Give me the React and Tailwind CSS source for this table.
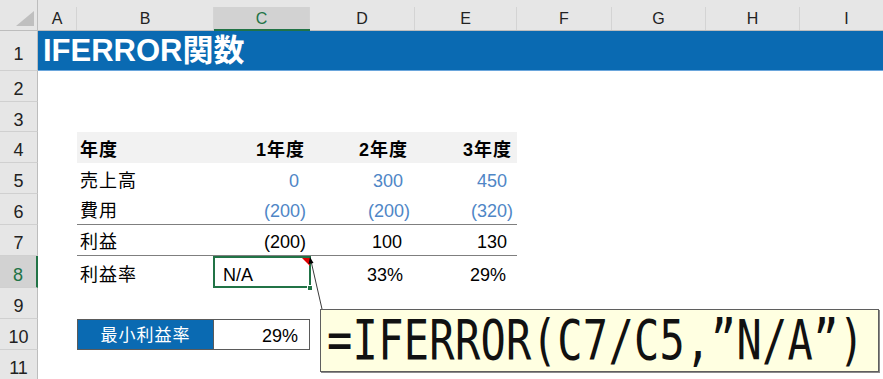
const COLS = [
  { k: "A", w: "w-[39px]" },
  { k: "B", w: "w-[137px]" },
  { k: "C", w: "w-[96px]" },
  { k: "D", w: "w-[105px]" },
  { k: "E", w: "w-[102px]" },
  { k: "F", w: "w-[95px]" },
  { k: "G", w: "w-[94px]" },
  { k: "H", w: "w-[94px]" },
  { k: "I", w: "w-[94px]" },
];

const BLUE_NUM = "text-[#4f86c6]";

function Row({ n, h, sel, children }) {
  return (
    <div className={`flex ${h}`}>
      <div
        className={`w-[38px] shrink-0 flex items-center justify-center pt-[7px] text-[18px] border-b border-b-[#d0d0d0] ${
          sel
            ? "bg-[#d2d2d2] text-[#217346] border-r-2 border-r-[#217346]"
            : "bg-[#e6e6e6] text-[#222] border-r border-r-[#bdbdbd]"
        }`}
      >
        {n}
      </div>
      <div className="flex flex-1 min-w-0">{children}</div>
    </div>
  );
}

function Cell({ w, right, className = "", children }) {
  return (
    <div
      className={`${w} shrink-0 h-full flex items-end pb-[2px] leading-[22px] text-[18px] ${
        right ? "justify-end" : "justify-start"
      } ${className}`}
    >
      {children}
    </div>
  );
}

export default function App() {
  return (
    <div className="relative w-[883px] h-[379px] overflow-hidden bg-white text-black font-['Liberation_Sans','Noto_Sans_CJK_JP',sans-serif]">
      {/* column headers */}
      <div className="flex h-[31px] bg-[#e6e6e6]">
        <div className="w-[38px] shrink-0 border-r border-b border-[#bdbdbd] flex items-end justify-end pr-[3px] pb-[4px]">
          <svg width="18" height="15" viewBox="0 0 18 15">
            <polygon points="18,0 18,15 0,15" fill="#bfbfbf" />
          </svg>
        </div>
        {COLS.map((c) => (
          <div
            key={c.k}
            className={`${c.w} shrink-0 pt-[7px] flex ${
              c.k === "C" ? "border-b-2 border-b-[#217346]" : "border-b border-b-[#bdbdbd]"
            }`}
          >
            <div
              className={`flex-1 flex items-center justify-center pt-[1px] text-[16px] border-r border-r-[#d4d4d4] ${
                c.k === "C" ? "bg-[#d2d2d2] text-[#217346]" : "text-[#222]"
              }`}
            >
              {c.k}
            </div>
          </div>
        ))}
      </div>

      <Row n="1" h="h-[40px]">
        <div className="flex-1 bg-[#0a6ab2] border-b border-b-[#6aa6dc] flex items-center pl-[5px] text-white font-bold text-[31px] leading-none">
          IFERROR関数
        </div>
      </Row>
      <Row n="2" h="h-[31px]" />
      <Row n="3" h="h-[30px]" />

      <Row n="4" h="h-[31px]">
        <div className="w-[39px] shrink-0" />
        <div className="flex bg-[#f2f2f2] font-bold">
          <Cell w="w-[137px]" className="pl-[3px] tracking-[1px]">年度</Cell>
          <Cell w="w-[96px]" right className="pr-[5px] tracking-[1px]">1年度</Cell>
          <Cell w="w-[105px]" right className="pr-[7px] tracking-[1px]">2年度</Cell>
          <Cell w="w-[102px]" right className="pr-[5px] tracking-[1px]">3年度</Cell>
        </div>
      </Row>

      <Row n="5" h="h-[31px]">
        <div className="w-[39px] shrink-0" />
        <Cell w="w-[137px]" className="pl-[3px] tracking-[1px]">売上高</Cell>
        <Cell w="w-[96px]" right className={`pr-[11px] ${BLUE_NUM}`}>0</Cell>
        <Cell w="w-[105px]" right className={`pr-[12px] ${BLUE_NUM}`}>300</Cell>
        <Cell w="w-[102px]" right className={`pr-[10px] ${BLUE_NUM}`}>450</Cell>
      </Row>

      <Row n="6" h="h-[31px]">
        <div className="w-[39px] shrink-0" />
        <div className="flex border-b border-b-[#7f7f7f]">
          <Cell w="w-[137px]" className="pl-[3px] tracking-[1px]">費用</Cell>
          <Cell w="w-[96px]" right className={`pr-[4px] ${BLUE_NUM}`}>(200)</Cell>
          <Cell w="w-[105px]" right className={`pr-[5px] ${BLUE_NUM}`}>(200)</Cell>
          <Cell w="w-[102px]" right className={`pr-[4px] ${BLUE_NUM}`}>(320)</Cell>
        </div>
      </Row>

      <Row n="7" h="h-[31px]">
        <div className="w-[39px] shrink-0" />
        <div className="flex border-b border-b-[#7f7f7f]">
          <Cell w="w-[137px]" className="pl-[3px] tracking-[1px]">利益</Cell>
          <Cell w="w-[96px]" right className="pr-[4px]">(200)</Cell>
          <Cell w="w-[105px]" right className="pr-[13px]">100</Cell>
          <Cell w="w-[102px]" right className="pr-[10px]">130</Cell>
        </div>
      </Row>

      <Row n="8" h="h-[32px]" sel>
        <div className="w-[39px] shrink-0" />
        <Cell w="w-[137px]" className="pl-[3px] tracking-[1px]">利益率</Cell>
        <Cell w="w-[96px]" className="pl-[9px] relative">
          N/A
          <div className="absolute -left-[1px] top-0 -right-[1px] bottom-0 border-2 border-[#217346]" />
          <div className="absolute -right-[3px] -bottom-[3px] w-[6px] h-[6px] bg-[#217346] border border-white" />
        </Cell>
        <Cell w="w-[105px]" right className="pr-[12px]">33%</Cell>
        <Cell w="w-[102px]" right className="pr-[11px]">29%</Cell>
      </Row>

      <Row n="9" h="h-[31px]" />

      <Row n="10" h="h-[31px]">
        <div className="w-[39px] shrink-0" />
        <div className="w-[137px] shrink-0 h-full bg-[#0a6ab2] text-white border border-[#5a5a5a] flex items-center justify-center pt-[2px] text-[17px] tracking-[1px]">
          最小利益率
        </div>
        <div className="w-[96px] shrink-0 h-full border-y border-r border-[#5a5a5a] flex items-center justify-end pr-[11px] pt-[3px] text-[18px]">
          29%
        </div>
      </Row>

      <Row n="11" h="h-[31px]" />

      {/* comment connector */}
      <svg
        className="absolute left-0 top-0 pointer-events-none"
        width="883"
        height="379"
        viewBox="0 0 883 379"
      >
        <polygon points="302,258 310,258 310,266" fill="#e00000" />
        <line x1="311" y1="261" x2="322" y2="309" stroke="#3a3a3a" strokeWidth="1" />
        <polygon points="310,257 308.5,264 313.5,263" fill="#000" />
      </svg>

      {/* comment box */}
      <div className="absolute left-[320px] top-[309px] w-[559px] h-[63px] bg-[#ffffe1] border border-[#5f5f5f] shadow-[1px_1px_0_#8a8a8a] flex items-center pl-[6px] overflow-hidden">
        <span className="inline-block origin-center scale-y-[1.3] text-[42px] leading-none tracking-[0.3px] text-[#111] font-['DejaVu_Sans_Mono',monospace]">
          =IFERROR(C7/C5,”N/A”)
        </span>
      </div>
    </div>
  );
}
